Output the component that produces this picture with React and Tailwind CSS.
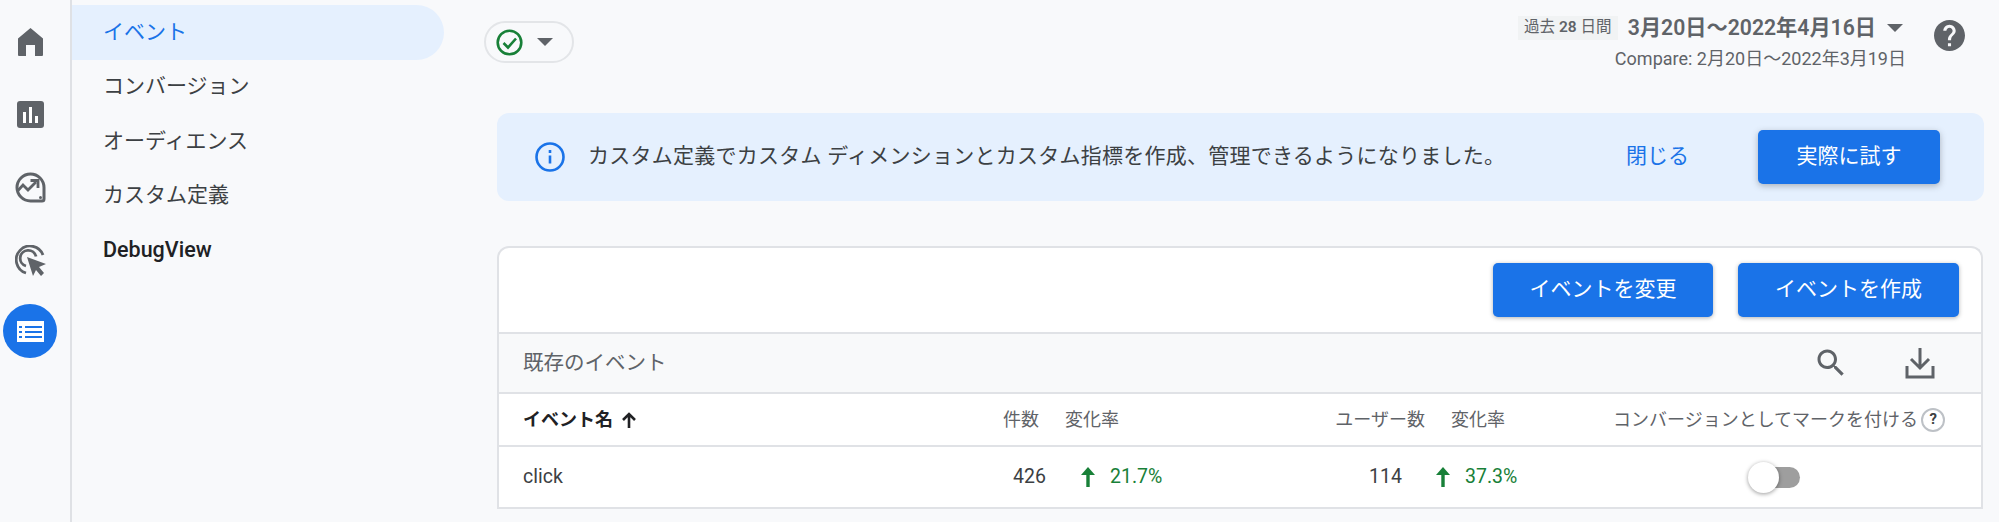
import React from 'react';

const Rail = () => (
  <div className="w-[72px] shrink-0 border-r-2 border-[#dfe1e5] flex flex-col items-center pt-[28px] pr-[10px]">
    <div className="h-[73px] w-full flex justify-center">
      <svg width="25" height="28" viewBox="0 0 25 28" fill="#5f6368">
        <path d="M12.500 0L25 10.500V27a1 1 0 0 1-1 1H17V17H8v11H1a1 1 0 0 1-1-1V10.500z" />
      </svg>
    </div>
    <div className="h-[71px] w-full flex justify-center">
      <svg width="27" height="27" viewBox="0 0 27 27">
        <rect width="27" height="27" rx="3" fill="#5f6368" />
        <rect x="6" y="11" width="3" height="11" fill="#fff" />
        <rect x="12" y="6" width="3" height="16" fill="#fff" />
        <rect x="18" y="15" width="3" height="7" fill="#fff" />
      </svg>
    </div>
    <div className="h-[73px] w-full flex justify-center">
      <svg width="31" height="31" viewBox="0 0 31 31" fill="none" stroke="#5f6368" strokeWidth="3">
        <path d="M29 15.500A13.500 13.500 0 1 0 15.500 29H27a2 2 0 0 0 2-2z" />
        <path d="M3 18.500l5-5.500 5 5 8-8" strokeWidth="2.800" />
        <path d="M15.500 8.500H23v7.500" strokeWidth="2.800" />
        <circle cx="25.500" cy="25.500" r="1.500" fill="#5f6368" stroke="none" />
      </svg>
    </div>
    <div className="h-[59px] w-full flex justify-center">
      <svg width="31" height="31" viewBox="0 0 31 31" fill="none" stroke="#5f6368" strokeWidth="2.800">
        <path d="M28 10A13.800 13.800 0 1 0 11 28" />
        <path d="M21 11.500A8 8 0 1 0 11 21" />
        <path d="M12 12l19 7-7 3 5 6-3 3-5-6-3 6z" fill="#5f6368" stroke="none" />
      </svg>
    </div>
    <div className="w-[54px] h-[54px] rounded-full bg-[#1a73e8] flex items-center justify-center shrink-0">
      <svg width="27" height="21" viewBox="0 0 27 21">
        <rect width="27" height="21" fill="#fff" />
        <rect x="2" y="5" width="3" height="2" fill="#1a73e8" />
        <rect x="8" y="5" width="17" height="2" fill="#1a73e8" />
        <rect x="2" y="10" width="3" height="2" fill="#1a73e8" />
        <rect x="8" y="10" width="17" height="2" fill="#1a73e8" />
        <rect x="2" y="15" width="3" height="2" fill="#1a73e8" />
        <rect x="8" y="15" width="17" height="2" fill="#1a73e8" />
      </svg>
    </div>
  </div>
);

const NavItem = ({ label, active, medium }) => (
  <div
    className={`h-[54.500px] pl-[31px] flex items-center rounded-r-full ${
      active
        ? 'text-[21px] bg-[#e5f0fe] text-[#1a73e8]'
        : medium
          ? 'text-[21.500px] text-[#202124] font-medium'
          : 'text-[21px] text-[#3c4043]'
    }`}
  >
    {label}
  </div>
);

const Nav = () => (
  <div className="w-[412px] shrink-0 pt-[5px] pr-[40px]">
    <NavItem label="イベント" active />
    <NavItem label="コンバージョン" />
    <NavItem label="オーディエンス" />
    <NavItem label="カスタム定義" />
    <NavItem label="DebugView" medium />
  </div>
);

const Caret = ({ className }) => (
  <svg width="16" height="8" viewBox="0 0 16 8" className={className}>
    <path d="M0 0h16L8 8z" fill="#5f6368" />
  </svg>
);

const HelpIcon = ({ size, fill }) => (
  <svg width={size} height={size} viewBox="2 2 20 20" fill={fill}>
    <path d="M12 2C6.480 2 2 6.480 2 12s4.480 10 10 10 10-4.480 10-10S17.520 2 12 2zm1 17h-2v-2h2v2zm2.070-7.750l-.9.920C13.450 12.900 13 13.500 13 15h-2v-.5c0-1.100.45-2.100 1.170-2.830l1.240-1.260c.37-.36.59-.86.59-1.410 0-1.100-.9-2-2-2s-2 .9-2 2H8c0-2.210 1.790-4 4-4s4 1.790 4 4c0 .88-.36 1.680-.93 2.250z" />
  </svg>
);

const TopBar = () => (
  <div className="h-[113px] flex justify-between items-start pr-[34px]">
    <div className="mt-[21px] w-[90px] h-[42px] rounded-full border-2 border-[#e3e5e8] flex items-center pl-[10px] gap-[14px]">
      <svg width="27" height="27" viewBox="0 0 27 27" fill="none" stroke="#188038">
        <circle cx="13.500" cy="13.500" r="11.800" strokeWidth="2.600" />
        <path d="M7.500 14l4.500 4.500 8-9" strokeWidth="2.600" />
      </svg>
      <Caret />
    </div>
    <div className="flex items-center gap-[27px]">
      <div className="flex flex-col items-end pt-[15px]">
        <div className="flex items-center h-[25px]">
          <span className="w-[100px] h-[24px] bg-[#f1f3f4] flex items-center justify-center text-[15.500px] text-[#5f6368]">
            過去&nbsp;<b className="font-semibold">28</b>&nbsp;日間
          </span>
          <span className="ml-[10px] text-[21.200px] font-semibold text-[#5f6368] leading-[24px]">3月20日〜2022年4月16日</span>
          <Caret className="ml-[11px] mr-[4px]" />
        </div>
        <div className="mt-[7px] text-[18px] text-[#5f6368] leading-[24px] pr-[1px]">Compare: 2月20日〜2022年3月19日</div>
      </div>
      <HelpIcon size={31} fill="#5f6368" />
    </div>
  </div>
);

const Banner = () => (
  <div className="ml-[13px] mr-[15px] h-[88px] bg-[#e5f0fe] rounded-[12px] flex items-center pl-[38px] pr-[44px] text-[21px]">
    <svg width="30" height="30" viewBox="0 0 30 30" fill="none" stroke="#1a73e8" strokeWidth="2.600">
      <circle cx="15" cy="15" r="13.500" />
      <path d="M15 13.500v8M15 8v3" />
    </svg>
    <span className="ml-[23px] text-[#3c4043] tracking-[0.25px]">カスタム定義でカスタム ディメンションとカスタム指標を作成、管理できるようになりました。</span>
    <span className="ml-auto text-[#1a73e8]">閉じる</span>
    <button className="ml-[69px] w-[182px] h-[54px] bg-[#1a73e8] text-white rounded-[5px] shadow-[0_2px_6px_rgba(60,64,67,0.35)]">実際に試す</button>
  </div>
);

const UpArrow = () => (
  <svg width="14" height="20" viewBox="0 0 14 20" fill="#188038" className="shrink-0">
    <path d="M7 0l7 8H8.700v12H5.300V8H0z" />
  </svg>
);

const Table = () => (
  <div className="ml-[13px] mr-[16px] mt-[45px] bg-white border-2 border-[#e0e2e6] rounded-t-[12px] border-b-0">
    <div className="h-[84px] flex justify-end gap-[25px] pt-[15px] pr-[22px] text-[21px]">
      <button className="w-[220px] h-[54px] bg-[#1a73e8] text-white rounded-[5px] shadow-[0_1px_4px_rgba(60,64,67,0.4)]">イベントを変更</button>
      <button className="w-[221px] h-[54px] bg-[#1a73e8] text-white rounded-[5px] shadow-[0_1px_4px_rgba(60,64,67,0.4)]">イベントを作成</button>
    </div>
    <div className="h-[62px] bg-[#f8f9fa] border-y-2 border-[#e0e2e6] flex items-center pl-[24px] text-[20.500px] text-[#5f6368]">
      <span>既存のイベント</span>
      <svg width="36" height="36" viewBox="0 0 24 24" fill="#5f6368" className="ml-auto">
        <path d="M15.500 14h-.79l-.28-.27C15.410 12.590 16 11.110 16 9.500 16 5.910 13.090 3 9.500 3S3 5.910 3 9.500 5.910 16 9.500 16c1.610 0 3.090-.59 4.230-1.570l.27.28v.79l5 4.990L20.490 19l-4.990-5zm-6 0C7.010 14 5 11.990 5 9.500S7.010 5 9.500 5 14 7.010 14 9.500 11.990 14 9.500 14z" />
      </svg>
      <svg width="32" height="34" viewBox="0 0 32 34" fill="none" stroke="#5f6368" strokeWidth="3" className="ml-[55px] mr-[45px]">
        <path d="M16 2v20M7 13l9 9 9-9" />
        <path d="M3 20v11h26V20" />
      </svg>
    </div>
    <div className="h-[53px] grid grid-cols-[477px_50px_270px_110px_170px_1fr] items-center pl-[24px] border-b-2 border-[#e0e2e6] text-[18px] text-[#5f6368]">
      <div className="font-semibold text-[#202124] flex items-center gap-[8px]">
        イベント名
        <svg width="16" height="16" viewBox="0 0 16 16" fill="none" stroke="#202124" strokeWidth="2.600">
          <path d="M8 16V2M2 8l6-6 6 6" />
        </svg>
      </div>
      <div className="text-right pr-[11px]">件数</div>
      <div className="pl-[15px]">変化率</div>
      <div className="text-right pr-[5px]">ユーザー数</div>
      <div className="pl-[21px]">変化率</div>
      <div className="pl-[13px] flex items-center gap-[3px]">
        コンバージョンとしてマークを付ける
        <span className="w-[24px] h-[24px] rounded-full border-2 border-[#bdc1c6] flex items-center justify-center text-[15px] font-bold text-[#3c4043]">?</span>
      </div>
    </div>
    <div className="h-[62px] grid grid-cols-[477px_50px_270px_110px_170px_1fr] items-center pl-[24px] border-b-2 border-[#e0e2e6] text-[19.500px] text-[#3c4043]">
      <div>click</div>
      <div className="text-right pr-[4px]">426</div>
      <div className="pl-[31px] flex items-center gap-[15px] text-[#188038]">
        <UpArrow />
        21.7%
      </div>
      <div className="text-right pr-[28px]">114</div>
      <div className="pl-[6px] flex items-center gap-[15px] text-[#188038]">
        <UpArrow />
        37.3%
      </div>
      <div className="pl-[155px]">
        <div className="relative w-[45px] h-[21px] rounded-full bg-[#9e9e9e]">
          <div className="absolute left-[-7px] top-[-5px] w-[31px] h-[31px] rounded-full bg-white shadow-[0_1px_4px_rgba(0,0,0,0.4)]" />
        </div>
      </div>
    </div>
  </div>
);

const App = () => (
  <div
    className="w-[1999px] h-[522px] overflow-hidden flex bg-[#f8f9fb]"
    style={{ fontFamily: 'Roboto, "Noto Sans CJK JP", sans-serif' }}
  >
    <Rail />
    <Nav />
    <div className="flex-1 min-w-0">
      <TopBar />
      <Banner />
      <Table />
    </div>
  </div>
);

export default App;
